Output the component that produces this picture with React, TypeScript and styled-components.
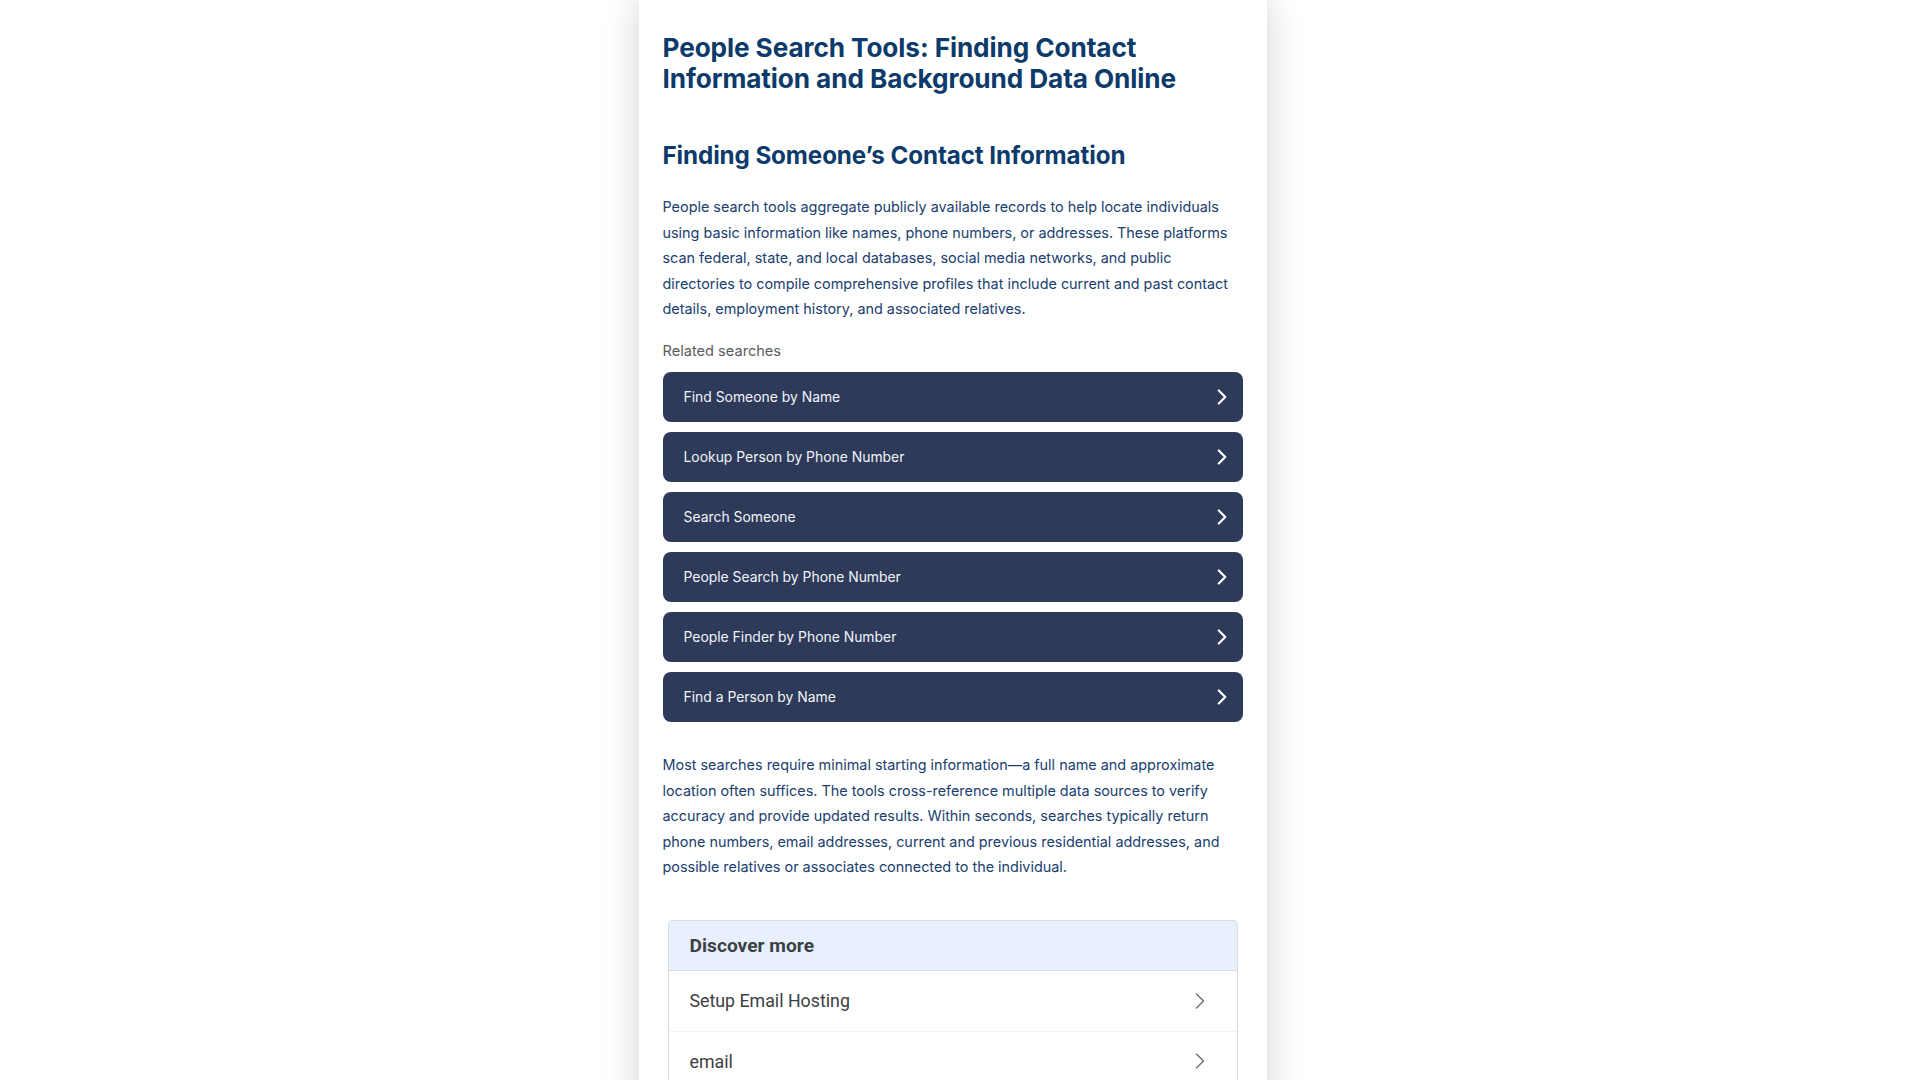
import React from "react";
import styled, { createGlobalStyle } from "styled-components";
import { ChevronRight } from "lucide-react";

const GlobalStyle = createGlobalStyle`
  html, body {
    margin: 0;
    padding: 0;
    background: #ffffff;
  }
  body {
    font-family: Inter, "Noto Sans", "Liberation Sans", sans-serif;
    -webkit-font-smoothing: antialiased;
  }
  * { box-sizing: border-box; }
`;

/* Right padding keeps the column where it sits beside a classic 15px scrollbar gutter */
const Page = styled.div`
  display: flex;
  justify-content: center;
  padding-right: 15px;
  background: #ffffff;
`;

const Article = styled.article`
  width: 628px;
  min-height: 6300px;
  padding: 33px 24px 40px;
  background: #ffffff;
  box-shadow: 0 0 34px rgba(0, 0, 0, 0.18);
  display: flex;
  flex-direction: column;
`;

const Title = styled.h1`
  margin: 0;
  font-size: 26.2px;
  line-height: 30.7px;
  font-weight: 700;
  color: #0b3a6b;
  letter-spacing: -0.1px;
`;

const Heading = styled.h2`
  margin: 48px 0 0;
  font-size: 24.2px;
  line-height: 28.6px;
  font-weight: 700;
  color: #0b3a6b;
  letter-spacing: -0.1px;
`;

const Paragraph = styled.p<{ $top: number }>`
  margin: ${(p) => p.$top}px 0 0;
  font-size: 14.4px;
  line-height: 25.6px;
  color: #1a406f;
`;

const RelatedLabel = styled.div`
  margin-top: 20px;
  font-size: 14.6px;
  line-height: 18px;
  color: #5b5b5b;
`;

const SearchList = styled.div`
  margin-top: 12px;
  display: flex;
  flex-direction: column;
  gap: 10px;
`;

const SearchButton = styled.a`
  height: 50px;
  display: flex;
  align-items: center;
  justify-content: space-between;
  padding: 0 8px 0 21px;
  background: #2e3a59;
  border-radius: 8px;
  color: #f2f4f8;
  font-size: 13.9px;
  text-decoration: none;
  cursor: pointer;
`;

const Discover = styled.section`
  margin: 40px 5px 0;
  border: 1px solid #dadce0;
  border-radius: 4px 4px 0 0;
  overflow: hidden;
  font-family: Roboto, "Liberation Sans", sans-serif;
`;

const DiscoverHeader = styled.div`
  height: 50px;
  display: flex;
  align-items: center;
  padding: 0 21px;
  background: #e8f0fe;
  border-bottom: 1px solid #dadce0;
  color: #3c4043;
  font-size: 19.2px;
  font-weight: 700;
`;

const DiscoverRow = styled.a`
  height: 60px;
  display: flex;
  align-items: center;
  justify-content: space-between;
  padding: 0 23px 0 21px;
  color: #3c4043;
  font-size: 17.8px;
  text-decoration: none;
  & + & {
    border-top: 1px solid #f1f3f4;
  }
`;

const searches = [
  "Find Someone by Name",
  "Lookup Person by Phone Number",
  "Search Someone",
  "People Search by Phone Number",
  "People Finder by Phone Number",
  "Find a Person by Name",
];

const discover = [
  "Setup Email Hosting",
  "email",
  "Background check services",
  "Reverse phone lookup",
];

export default function App() {
  return (
    <>
      <GlobalStyle />
      <Page>
        <Article>
          <Title>
            People Search Tools: Finding Contact Information and Background Data Online
          </Title>
          <Heading>Finding Someone’s Contact Information</Heading>
          <Paragraph $top={23}>
            People search tools aggregate publicly available records to help locate
            individuals using basic information like names, phone numbers, or addresses.
            These platforms scan federal, state, and local databases, social media
            networks, and public directories to compile comprehensive profiles that
            include current and past contact details, employment history, and associated
            relatives.
          </Paragraph>
          <RelatedLabel>Related searches</RelatedLabel>
          <SearchList>
            {searches.map((s) => (
              <SearchButton key={s}>
                <span>{s}</span>
                <ChevronRight size={26} strokeWidth={2} color="#ffffff" />
              </SearchButton>
            ))}
          </SearchList>
          <Paragraph $top={30}>
            Most searches require minimal starting information—a full name and
            approximate location often suffices. The tools cross-reference multiple data
            sources to verify accuracy and provide updated results. Within seconds,
            searches typically return phone numbers, email addresses, current and
            previous residential addresses, and possible relatives or associates
            connected to the individual.
          </Paragraph>
          <Discover>
            <DiscoverHeader>Discover more</DiscoverHeader>
            {discover.map((d) => (
              <DiscoverRow key={d}>
                <span>{d}</span>
                <ChevronRight size={28} strokeWidth={1.3} color="#757575" />
              </DiscoverRow>
            ))}
          </Discover>
        </Article>
      </Page>
    </>
  );
}
